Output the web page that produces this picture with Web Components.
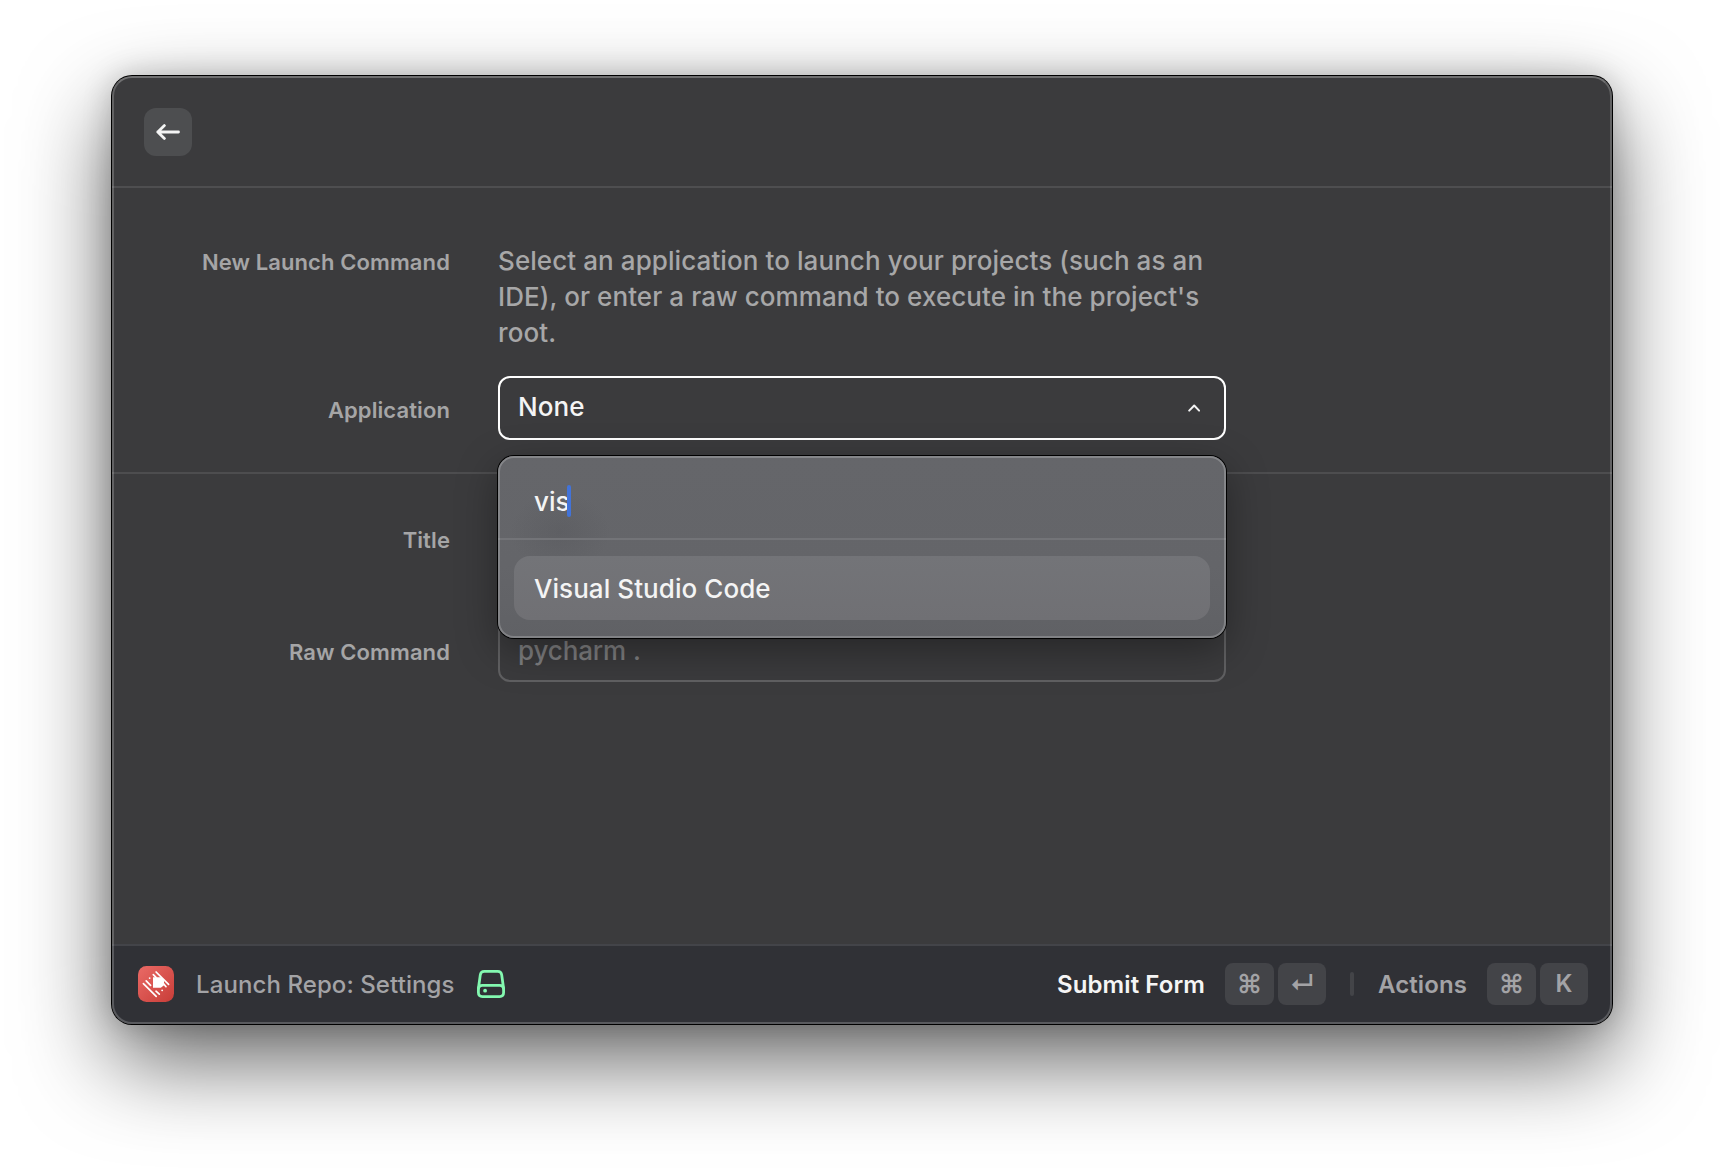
<!DOCTYPE html>
<html lang="en">
<head>
<meta charset="utf-8">
<title>Launch Repo: Settings</title>
<style>
  html, body { margin: 0; height: 100%; background: #fff; }
  body {
    display: flex; justify-content: center; padding-top: 76px; box-sizing: border-box;
    height: 1172px; overflow: hidden;
    font-family: Inter, "Liberation Sans", sans-serif; -webkit-font-smoothing: antialiased;
  }
</style>
</head>
<body>
<launcher-window>
  <launcher-header slot="header"></launcher-header>
  <form-section>
    <form-row label="New Launch Command" kind="text">
      <form-description>Select an application to launch your projects (such as an IDE), or enter a raw command to execute in the project's root.</form-description>
    </form-row>
    <form-row label="Application">
      <select-field value="None">
        <select-popup query="vis"><popup-item>Visual Studio Code</popup-item></select-popup>
      </select-field>
    </form-row>
  </form-section>
  <form-section class="second">
    <form-row label="Title"><input-field></input-field></form-row>
    <form-row label="Raw Command"><input-field>pycharm .</input-field></form-row>
  </form-section>
  <launcher-footer slot="footer">
    <repo-logo slot="start"></repo-logo>
    <span slot="start">Launch Repo: Settings</span>
    <drive-icon slot="start"></drive-icon>
    <footer-action class="primary" label="Submit Form"><key-cap wide>⌘</key-cap><key-cap class="ret">↵</key-cap></footer-action>
    <footer-divider></footer-divider>
    <footer-action label="Actions"><key-cap wide>⌘</key-cap><key-cap class="letter">K</key-cap></footer-action>
  </launcher-footer>
</launcher-window>

<script>
const define = (name, render) => customElements.define(name, class extends HTMLElement {
  constructor() { super(); this.attachShadow({ mode: 'open' }); }
  connectedCallback() { this.shadowRoot.innerHTML = render(this); }
});

define('launcher-window', () => `
<style>
  :host { display: flex; flex-direction: column; position: relative; width: 1500px; height: 948px;
    border-radius: 20px; background: #3b3b3d; overflow: visible;
    box-shadow: 0 0 0 1px #000, 0 36px 90px rgba(0,0,0,.62), 0 0 30px rgba(0,0,0,.2); }
  :host::after { content: ""; position: absolute; inset: 0; border-radius: 20px; pointer-events: none;
    border: 2px solid rgba(255,255,255,.2); border-top-color: rgba(255,255,255,.27); }
  main { flex: 1; }
</style>
<slot name="header"></slot><main><slot></slot></main><slot name="footer"></slot>`);

define('launcher-header', () => `
<style>
  :host { display: flex; align-items: center; height: 112px; box-sizing: border-box;
    padding: 2px 32px 0; border-bottom: 2px solid #4e4e50; }
  button { display: flex; align-items: center; justify-content: center; width: 48px; height: 48px;
    padding: 0; border: 0; border-radius: 12px; background: #4d4e50; }
  svg { display: block; }
</style>
<button aria-label="Back"><svg width="24" height="16" viewBox="0 0 24 16" fill="none" stroke="#f4f4f4" stroke-width="2.8" stroke-linecap="round" stroke-linejoin="round"><path d="M22.5 8H1.8M8.4 1.6 1.8 8l6.6 6.4"/></svg></button>`);

define('form-section', () => `
<style>
  :host { display: flex; flex-direction: column; gap: 25px; padding: 55px 0 32px; border-bottom: 2px solid #4d4d4f; }
  :host(.second) { gap: 48px; padding: 32px 0 0; border-bottom: 0; }
</style><slot></slot>`);

define('form-row', el => `
<style>
  :host { display: grid; grid-template-columns: 338px 728px; column-gap: 48px; }
  .label { margin-top: 2px; text-align: right; font-size: 22px; font-weight: 600; line-height: 64px;
    letter-spacing: .1px; color: #a5a5a6; height: 62px; white-space: nowrap; }
  :host([kind=text]) .label { margin-top: 1px; line-height: 36px; height: 35px; }
</style>
<div class="label">${el.getAttribute('label')}</div><slot></slot>`);

define('form-description', () => `
<style>
  :host { display: block; font-size: 26px; line-height: 36px; letter-spacing: .08px; font-weight: 480; color: #a7a7a8; }
</style><slot></slot>`);

define('select-field', el => `
<style>
  :host { display: flex; align-items: center; justify-content: space-between; position: relative;
    height: 64px; box-sizing: border-box; border: 2px solid #fff; border-radius: 12px; padding: 0 24px 0 18px;
    font-size: 26px; font-weight: 480; color: #f4f4f4; letter-spacing: .06px; }
  span { padding-bottom: 4px; }
  svg { display: block; }
</style>
<span>${el.getAttribute('value')}</span>
<svg width="12" height="8" viewBox="0 0 12 8" fill="none" stroke="#f4f4f4" stroke-width="2" stroke-linecap="round" stroke-linejoin="round"><path d="M1.200 6.600 6.200 1.500l4.900 5.100"/></svg>
<slot></slot>`);

define('select-popup', el => `
<style>
  :host { position: absolute; z-index: 10; left: -2px; top: 78px; width: 728px; height: 182px; box-sizing: border-box;
    display: flex; flex-direction: column; border-radius: 16px;
    background: radial-gradient(ellipse 50px 40px at 62px 76px, rgba(70,71,76,.2), transparent), linear-gradient(#65666a, #646569 60%, #606165);
    box-shadow: 0 0 0 1px #000, 0 12px 40px rgba(0,0,0,.36); }
  :host::after { content: ""; position: absolute; inset: 0; border-radius: 16px; border: 2px solid rgba(255,255,255,.21); pointer-events: none; }
  .search { display: flex; align-items: center; height: 84px; box-sizing: border-box; padding: 8px 36px 0;
    border-bottom: 2px solid #737478; }
  .caret { width: 4px; height: 32px; border-radius: 2px; background: #4273d9; margin-left: -2.4px; }
  .list { padding: 16px; }
</style>
<div class="search"><span>${el.getAttribute('query')}</span><span class="caret"></span></div>
<div class="list"><slot></slot></div>`);

define('popup-item', () => `
<style>
  :host { display: flex; align-items: center; height: 64px; padding: 0 20px; border-radius: 16px;
    background: linear-gradient(#737478, #707074); }
</style><slot></slot>`);

define('input-field', () => `
<style>
  :host { display: flex; align-items: center; height: 64px; box-sizing: border-box; border: 2px solid #606062;
    border-radius: 12px; padding: 0 18px; font-size: 26px; font-weight: 460; color: #7f7f81; letter-spacing: -.12px; }
</style><slot></slot>`);

define('launcher-footer', () => `
<style>
  :host { display: flex; align-items: center; justify-content: space-between; height: 80px; box-sizing: border-box;
    padding: 0 24px 2px 26px; background: #303136; border-top: 2px solid #434449; border-radius: 0 0 20px 20px;
    font-size: 24px; font-weight: 500; letter-spacing: .09px; color: #a3a3a6; }
  .start { display: flex; align-items: center; gap: 22px; }
  .end { display: flex; align-items: center; gap: 24px; }
</style>
<div class="start"><slot name="start"></slot></div><div class="end"><slot></slot></div>`);

define('repo-logo', () => `
<style>:host { display: block; width: 36px; height: 36px; } svg { display: block; }</style>
<svg width="36" height="36" viewBox="0 0 36 36">
  <defs><linearGradient id="g" x1="0" y1="0" x2="1" y2="1"><stop offset="0" stop-color="#ea6a66"/><stop offset="1" stop-color="#c83d38"/></linearGradient></defs>
  <rect width="36" height="36" rx="8.5" fill="url(#g)"/>
  <path d="M15 11.200h8.500l2.500 3v5l-3.200 2.500H15z" fill="#fff"/>
  <path d="M18.100 6 30.600 18.400M15.300 8.700l2.700 2.600M25 17l3 3.700M5.400 17.700l12.800 12.600M8.200 14.900l4.400 4.500M18 25.200l3.300 2.900M11.600 12.100l.1.100M24.100 24.300l.1.100" fill="none" stroke="#fff" stroke-width="1.700" stroke-linecap="round"/>
</svg>`);

define('drive-icon', () => `
<style>:host { display: block; width: 28px; height: 28px; } svg { display: block; }</style>
<svg width="28" height="28" viewBox="0 0 28 28" fill="none" stroke="#83f8b0" stroke-width="2.800" stroke-linejoin="round">
  <path d="M1.400 18.500 3.300 4.900Q3.800 1.400 7.200 1.400h13.600Q24.200 1.400 24.700 4.900L26.600 18.500v4.100q0 4-4 4H5.400q-4 0-4-4z"/>
  <path d="M1.400 19.500q0-4.100 4-4.100h17.200q4 0 4 4.100"/><circle cx="8.100" cy="20.700" r="1.900" fill="#83f8b0" stroke="none"/>
</svg>`);

define('footer-action', el => `
<style>
  :host { display: flex; align-items: center; gap: 20px; font-weight: 600; }
  :host(.primary) .label { color: #f5f5f5; }
  .keys { display: flex; gap: 4px; }
</style>
<span class="label">${el.getAttribute('label')}</span><div class="keys"><slot></slot></div>`);

define('key-cap', () => `
<style>
  :host { display: flex; align-items: center; justify-content: center; width: 48px; height: 42px; border-radius: 8px;
    background: #434448; color: #a3a3a6; font-size: 26px; font-weight: 600; line-height: 42px; letter-spacing: 0; }
  :host([wide]) { width: 49px; }
  :host(.ret) { font-size: 25px; }
  :host(.letter) { font-size: 24px; }
</style><slot></slot>`);

define('footer-divider', () => `
<style>:host { display: block; width: 4px; height: 24px; border-radius: 2px; background: #434448; }</style>`);
</script>
</body>
</html>
